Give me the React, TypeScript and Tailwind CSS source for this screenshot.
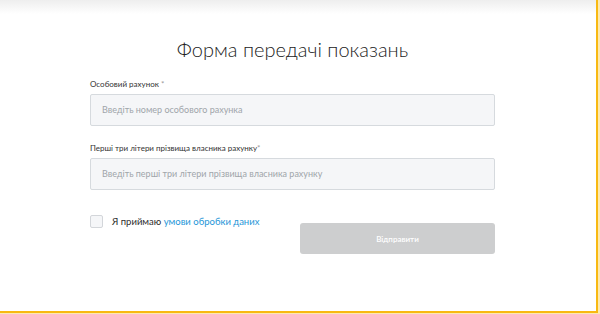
export default function App() {
  return (
    <div className="flex h-[314px] w-[600px] bg-[#fde9b0]" style={{ fontFamily: "Lato, 'Open Sans', sans-serif" }}>
      <div className="h-[313px] w-[598px] border-r-2 border-b-2 border-[#f8b912] bg-[linear-gradient(to_bottom,#eeeeee,#ffffff_14px)]">
        <div className="ml-[90px] w-[405px]">
          {/* Title */}
          <h1 className="pt-[37px] text-center text-[20px] leading-[24px] font-light text-[#222]">
            Форма передачі показань
          </h1>

          {/* Account */}
          <label className="mt-[18px] block text-[8px] leading-[10px] text-[#333]">
            Особовий рахунок <span className="text-[#9a9a9a]">*</span>
          </label>
          <div className="mt-[5px] flex h-[32px] items-center rounded-[2px] border border-[#d6dade] bg-[#f5f6f8] px-[11px] text-[9px] text-[#a0a5aa]">
            Введіть номер особового рахунка
          </div>

          {/* Surname */}
          <label className="mt-[17px] block text-[8px] leading-[10px] text-[#333]">
            Перші три літери прізвища власника рахунку<span className="text-[#9a9a9a]">*</span>
          </label>
          <div className="mt-[5px] flex h-[32px] items-center rounded-[2px] border border-[#d6dade] bg-[#f5f6f8] px-[11px] text-[9px] text-[#a0a5aa]">
            Введіть перші три літери прізвища власника рахунку
          </div>

          {/* Agreement + submit */}
          <div className="flex items-start justify-between">
            <div className="mt-[25px] flex items-center gap-[9px]">
              <span className="block h-[13px] w-[13px] rounded-[2px] border border-[#d3d6da] bg-[#f5f6f8]" />
              <span className="text-[9.5px] leading-[13px] text-[#2d2d2d]">
                Я приймаю <span className="text-[#1e96d8]">умови обробки даних</span>
              </span>
            </div>
            <button className="mt-[33px] flex h-[31px] w-[195px] items-center justify-center rounded-[3px] bg-[#cdcecf] text-[8px] font-semibold text-white">
              Відправити
            </button>
          </div>
        </div>
      </div>
    </div>
  );
}
